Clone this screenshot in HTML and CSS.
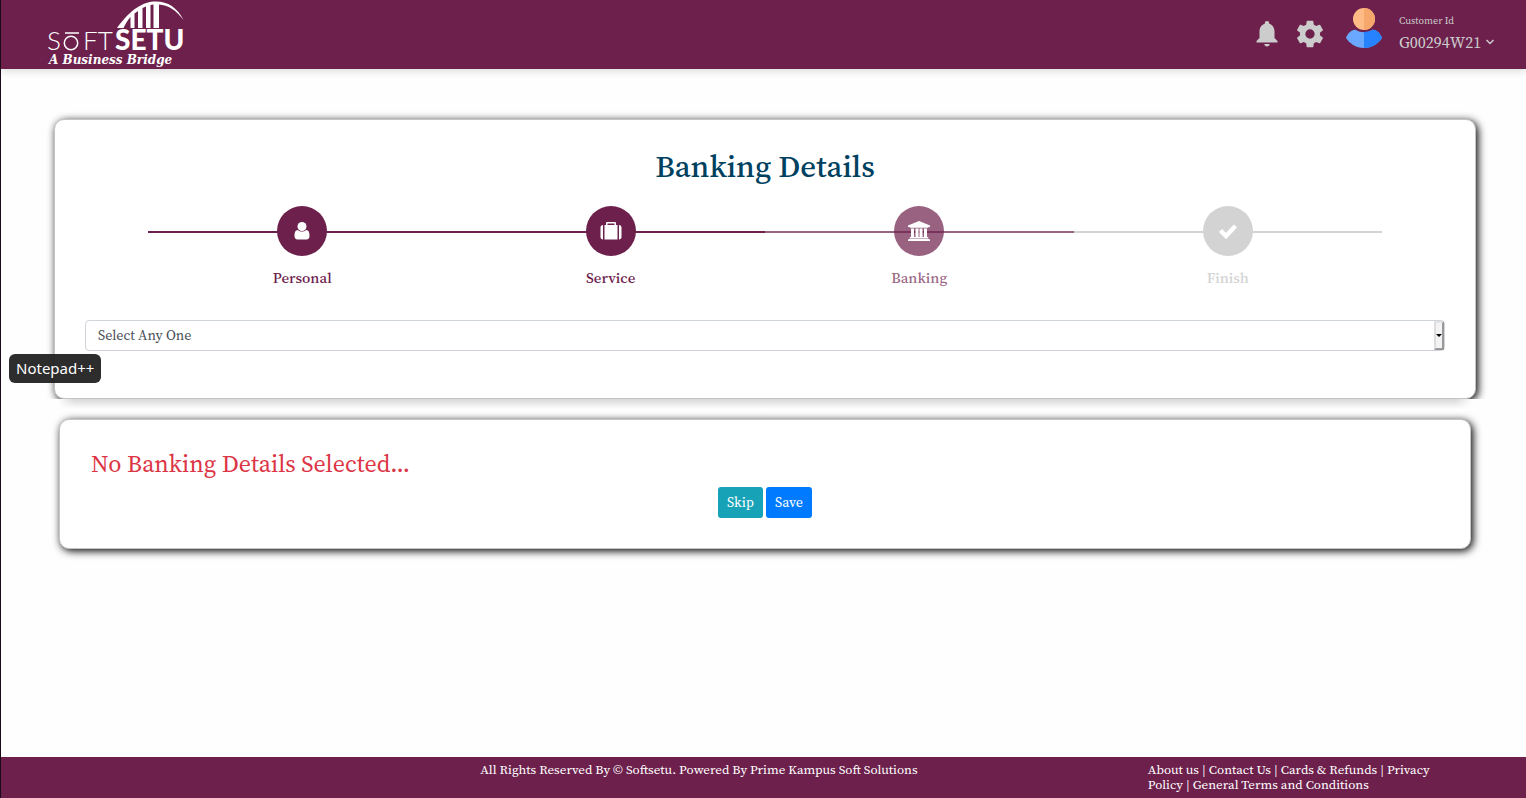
FILE: index.html
```
<!DOCTYPE html>
<html lang="en">
<head>
<meta charset="utf-8">
<meta name="viewport" content="width=device-width, initial-scale=1">
<title>Banking Details</title>
<link rel="stylesheet" href="styles.css">
</head>
<body>
<header class="topbar">
  <a class="logo" href="#" aria-label="Softsetu home">
    <svg width="144" height="68" viewBox="0 0 144 68">
      <path fill-rule="evenodd" d="M73 28C87 9 99 1.500 112 1.500c12 0 21 6 27.500 18.500C132 10 124 5 115 4.500V28h-5.500V4.500L106.500 5v23H102V6.500L98.500 8v20H94V11l-3.500 2.500V28h-4V17c-3 3-5 7-7 11z" fill="#fff"/>
      <path d="M21 33h14" stroke="#fff" stroke-width="1.500"/>
      <text class="logo-thin" x="3" y="50">S</text>
      <circle cx="27" cy="43" r="6.700" fill="none" stroke="#fff" stroke-width="1.500"/>
      <text class="logo-thin" x="39" y="50">FT</text>
      <text class="logo-heavy" x="71" y="50">SETU</text>
      <text class="logo-tag" x="5" y="64">A Business Bridge</text>
    </svg>
  </a>
  <div class="tools">
    <button class="icon-button" aria-label="Notifications"><svg width="22" height="26" viewBox="0 0 22 26"><path d="M11 0c1.400 0 2.200.9 2.200 2.100v.6C16.800 3.700 18.500 7 18.500 10.500V17l3 3v1.500H.5V20l3-3v-6.500C3.500 7 5.200 3.700 8.800 2.700v-.6C8.800.9 9.600 0 11 0zM8.300 23h5.400c0 1.500-1.200 2.500-2.700 2.500S8.300 24.500 8.300 23z" fill="#ccc"/></svg></button>
    <button class="icon-button" aria-label="Settings"><svg width="32" height="32" viewBox="0 0 24 24"><path fill="#ccc" d="M19.430 12.980c.04-.32.070-.64.070-.98s-.03-.66-.07-.98l2.110-1.650c.19-.15.240-.42.120-.64l-2-3.460c-.12-.22-.39-.3-.61-.22l-2.490 1c-.52-.4-1.080-.73-1.690-.98l-.38-2.650A.49.49 0 0 0 14 2h-4c-.25 0-.46.180-.49.420l-.38 2.650c-.61.250-1.170.590-1.690.980l-2.490-1c-.23-.09-.49 0-.61.220l-2 3.460c-.13.220-.07.490.120.640l2.110 1.650c-.04.320-.07.650-.07.980s.030.660.070.980l-2.110 1.650c-.19.150-.24.420-.12.640l2 3.460c.12.220.39.300.61.220l2.490-1c.52.400 1.080.730 1.690.980l.38 2.650c.03.240.24.420.49.420h4c.25 0 .46-.18.490-.42l.38-2.650c.61-.25 1.170-.59 1.690-.98l2.490 1c.23.090.49 0 .61-.22l2-3.460c.12-.22.070-.49-.12-.64l-2.110-1.650zM12 15.500a3.500 3.500 0 1 1 0-7 3.500 3.500 0 0 1 0 7z"/></svg></button>
    <svg class="avatar" width="38" height="42" viewBox="0 0 38 42"><circle cx="19" cy="12" r="11" fill="#ffbb85"/><path d="M19 1a11 11 0 0 1 0 22z" fill="#f5a76c"/><path d="M1 31c2-5 6-9 10-8 5 3 11 3 16 0 4-1 8 3 10 8-3 5-10 10-18 10S4 36 1 31z" fill="#6aa8ff"/><path d="M19 25c3 0 6-1 8-2 4-1 8 3 10 8-3 5-10 10-18 10z" fill="#2682ff"/></svg>
    <button class="customer">
      <span class="customer-label">Customer Id</span>
      <span class="customer-id">G00294W21 <svg width="10" height="10" viewBox="0 0 10 10"><path d="M1.500 2L5 5.500 8.500 2" fill="none" stroke="#ccc" stroke-width="1.500"/></svg></span>
    </button>
  </div>
</header>

<main class="page">
  <div class="wizard-frame">
    <section class="card wizard">
      <h1 class="title">Banking Details</h1>
      <ol class="steps">
        <li class="step">
          <span class="dot"><svg width="16" height="20" viewBox="0 0 16 20"><circle cx="8" cy="5.500" r="4.500" fill="#fff"/><path d="M4 9c2 2 6 2 8 0 3 0 3.500 3 3.500 6 0 2-1 3.500-3 3.500h-9c-2 0-3-1.500-3-3.500C.5 12 1 9 4 9z" fill="#fff"/></svg></span>
          <span class="step-name">Personal</span>
        </li>
        <li class="step">
          <span class="dot"><svg width="22" height="20" viewBox="0 0 22 20"><path d="M3 4v14.500C1.500 18.500.5 17.500.5 16V6.500C.5 5 1.500 4 3 4zm16 0c1.500 0 2.500 1 2.500 2.500V16c0 1.500-1 2.500-2.500 2.500zM4.500 4H6V2.300C6 1.500 6.500 1 7.300 1h7.400c.8 0 1.300.5 1.300 1.300V4h1.500v14.500h-13zM7.500 4h7V2.500h-7z" fill="#fff"/></svg></span>
          <span class="step-name">Service</span>
        </li>
        <li class="step current">
          <span class="dot"><svg width="24" height="22" viewBox="0 0 24 22"><path d="M12 1l11 4.500V7h-1.500L21 7.700H3L2.500 7H1V5.500zM4 8.500h3V17h1.500V8.500h3V17h1V8.500h3V17H17V8.500h3V17h.7l.6.600v.9H2.700v-.9l.6-.6H4zM2 19h20l1 .7V21H1v-1.300z" fill="#fff"/></svg></span>
          <span class="step-name">Banking</span>
        </li>
        <li class="step pending">
          <span class="dot"><svg width="20" height="16" viewBox="0 0 20 16"><path d="M2.500 7.500L8 13 17.500 3" fill="none" stroke="#fff" stroke-width="4.500"/></svg></span>
          <span class="step-name">Finish</span>
        </li>
      </ol>
      <div class="picker">
        <select class="picker-select" aria-label="Banking option"><option>Select Any One</option></select>
        <span class="picker-arrow"></span>
      </div>
    </section>
  </div>
  <div class="result-frame">
    <section class="card result">
      <h2 class="message">No Banking Details Selected...</h2>
      <div class="actions">
        <button class="btn skip">Skip</button>
        <button class="btn save">Save</button>
      </div>
    </section>
  </div>
</main>

<footer class="footer">
  <p class="copyright">All Rights Reserved By © Softsetu. Powered By Prime Kampus Soft Solutions</p>
  <nav class="links"><a href="#">About us</a> | <a href="#">Contact Us</a> | <a href="#">Cards &amp; Refunds</a> | <a href="#">Privacy Policy</a> | <a href="#">General Terms and Conditions</a></nav>
</footer>
<div class="tooltip" role="tooltip">Notepad++</div>
</body>
</html>
```

FILE: styles.css
```
* { box-sizing: border-box; }
body {
  margin: 0;
  min-height: 100vh;
  display: flex;
  flex-direction: column;
  border-left: 1px solid #1c0a1c;
  background: #fefefe;
  font-family: "Source Serif Pro", "Source Serif 4", "Liberation Serif", serif;
}
button, select { font-family: inherit; }
.topbar {
  height: 69px;
  display: flex;
  justify-content: space-between;
  align-items: flex-start;
  padding: 0 31px 0 43px;
  background: #6d204c;
  box-shadow: 0 2px 8px rgba(0, 0, 0, 0.15);
}
.logo svg { display: block; }
.logo-thin { font: 300 26px Lato, sans-serif; fill: #fff; }
.logo-heavy { font: 900 28px Lato, sans-serif; fill: #fff; }
.logo-tag { font: italic bold 12px "DejaVu Serif", serif; fill: #fff; }
.tools { display: flex; align-items: flex-start; }
.icon-button {
  height: 67px;
  padding: 0;
  border: 0;
  background: none;
  display: flex;
  align-items: center;
}
.icon-button + .icon-button { margin-left: 16px; }
.avatar { margin: 7px 16px 0 19px; }
.customer {
  display: flex;
  flex-direction: column;
  align-items: flex-start;
  gap: 3px;
  padding: 13px 0 0;
  border: 0;
  background: none;
  color: #ccc;
}
.customer-label { font-size: 10px; line-height: 16px; }
.customer-id { font-size: 16px; line-height: 20px; }

.page { flex: 1; padding: 50px 50px 0 53px; }
.wizard-frame { clip-path: inset(-20px -20px 0 -20px); }
.card {
  border: 1px solid #c4c4c4;
  border-radius: 10px;
  background: #fff;
  box-shadow: 2px 2px 8px #000;
}
.wizard { padding: 26px 30px 47px; }
.title {
  margin: 0;
  text-align: center;
  font-size: 31px;
  font-weight: 500;
  line-height: 40px;
  color: #00415f;
}
.steps {
  list-style: none;
  display: flex;
  margin: 20px 63px 32px;
  padding: 0;
}
.step {
  --tone: #6d204c;
  flex: 1;
  display: flex;
  flex-direction: column;
  align-items: center;
  gap: 12px;
  color: var(--tone);
  background: linear-gradient(var(--tone), var(--tone)) 0 25px / 100% 2px no-repeat;
}
.current { --tone: rgba(109, 32, 76, 0.7); }
.pending { --tone: #d3d3d3; }
.dot {
  width: 50px;
  height: 50px;
  border-radius: 50%;
  display: flex;
  align-items: center;
  justify-content: center;
  background: var(--tone);
}
.step-name { font-size: 15px; font-weight: 500; line-height: 20px; }
.picker { position: relative; }
.picker-select {
  appearance: none;
  display: block;
  width: 100%;
  height: 31px;
  padding: 0 12px 2px;
  border: 1px solid #ced4da;
  border-radius: 4px;
  background: #fff;
  font-size: 14px;
  color: #495057;
}
.picker-arrow {
  position: absolute;
  top: 1px;
  right: 1px;
  bottom: 1px;
  width: 10px;
  display: flex;
  align-items: center;
  justify-content: center;
  border: 2px solid;
  border-color: #e3e3e3 #999 #999 #ddd;
  background: #f3f3f3;
  pointer-events: none;
}
.picker-arrow::before {
  content: "";
  flex: none;
  border: 3px solid transparent;
  border-top-color: #000;
  border-bottom: 0;
}
.result-frame {
  padding: 20px 5px;
  background:
    linear-gradient(to right, #fefefe 4px, transparent 20px, transparent calc(100% - 20px), #fefefe calc(100% - 4px)),
    linear-gradient(#d8d8d8, transparent) 0 0 / 100% 10px no-repeat;
}
.result { padding: 29px 31px 30px; }
.message {
  margin: 0 0 8px;
  font-size: 24px;
  font-weight: 400;
  line-height: 30px;
  color: #dc3545;
}
.actions { display: flex; justify-content: center; gap: 3px; }
.btn {
  height: 31px;
  padding: 0 9px 2px;
  border: 0;
  border-radius: 3px;
  font-size: 14px;
  color: #fff;
}
.skip { background: #17a2b8; }
.save { background: #007bff; }

.footer {
  min-height: 41px;
  display: grid;
  grid-template-columns: 3fr 1fr;
  padding: 5px 0 6px;
  background: #6d204c;
  color: #fff;
  font-size: 13px;
  line-height: 15px;
}
.copyright { margin: 0; padding-left: 252px; text-align: center; }
.links { padding: 0 80px 0 3px; }
.links a { color: inherit; text-decoration: none; }
.tooltip {
  position: absolute;
  left: 9px;
  top: 354px;
  padding: 5px 7px;
  border-radius: 6px;
  background: rgba(32, 32, 32, 0.94);
  color: #fff;
  font: 15px/19px "Noto Sans", sans-serif;
}
```
